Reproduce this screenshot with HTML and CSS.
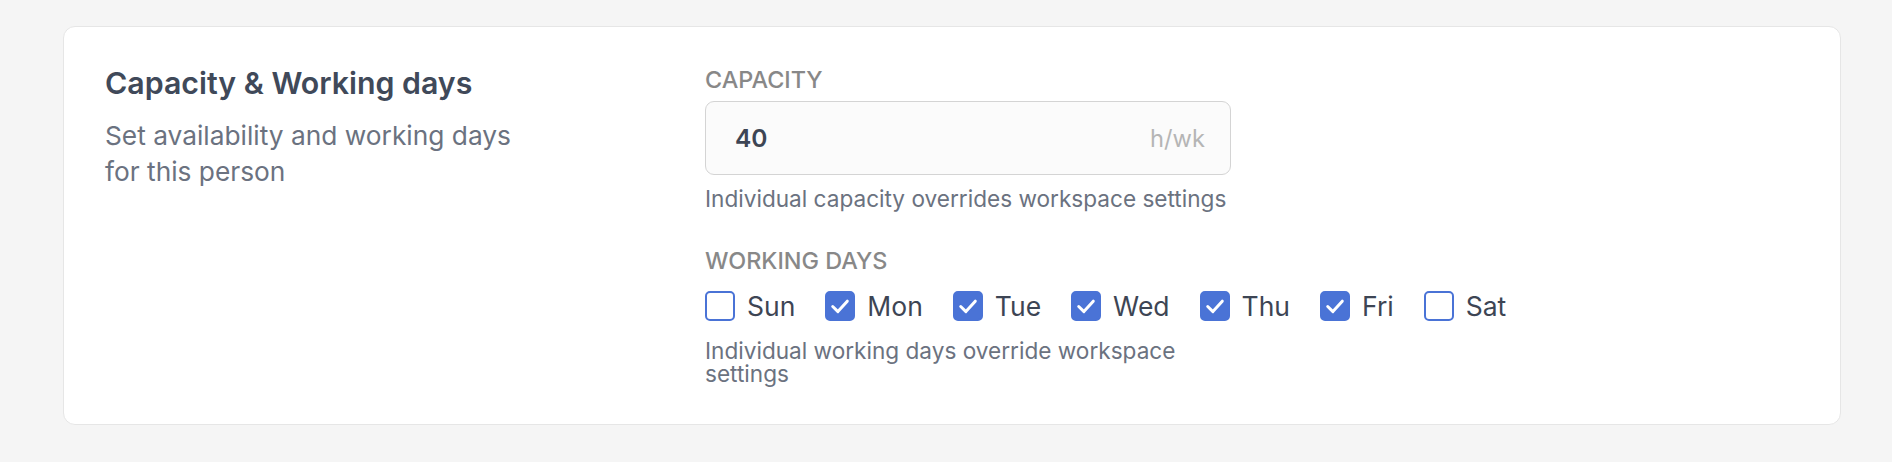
FILE: index.html
```html
<!DOCTYPE html>
<html lang="en">
<head>
<meta charset="utf-8">
<title>Capacity &amp; Working days</title>
<link rel="stylesheet" href="styles.css">
</head>
<body>
<main class="page">
  <section class="card">
    <div class="intro">
      <h2 class="title">Capacity &amp; Working days</h2>
      <p class="desc">Set availability and working days<br>for this person</p>
    </div>
    <div class="fields">
      <label class="label" for="cap">CAPACITY</label>
      <div class="input">
        <span class="value" id="cap">40</span>
        <span class="unit">h/wk</span>
      </div>
      <p class="help">Individual capacity overrides workspace settings</p>

      <div class="label label-days">WORKING DAYS</div>
      <div class="days">
        <span class="day"><span class="box"></span>Sun</span>
        <span class="day"><span class="box on"><svg viewBox="0 0 20 20"><path d="M4.4 10.4l4 3.9 7.2-8"/></svg></span>Mon</span>
        <span class="day"><span class="box on"><svg viewBox="0 0 20 20"><path d="M4.4 10.4l4 3.9 7.2-8"/></svg></span>Tue</span>
        <span class="day"><span class="box on"><svg viewBox="0 0 20 20"><path d="M4.4 10.4l4 3.9 7.2-8"/></svg></span>Wed</span>
        <span class="day"><span class="box on"><svg viewBox="0 0 20 20"><path d="M4.4 10.4l4 3.9 7.2-8"/></svg></span>Thu</span>
        <span class="day"><span class="box on"><svg viewBox="0 0 20 20"><path d="M4.4 10.4l4 3.9 7.2-8"/></svg></span>Fri</span>
        <span class="day"><span class="box"></span>Sat</span>
      </div>
      <p class="help help-days">Individual working days override workspace settings</p>
    </div>
  </section>
</main>
</body>
</html>
```
FILE: styles.css
```css
html, body {
  margin: 0;
  padding: 0;
  background: #f5f5f5;
}
body {
  font-family: "Inter", "Open Sans", sans-serif;
  color: #3d4554;
}
.page {
  padding: 26px 51px 0 63px;
}
.card {
  background: #ffffff;
  border: 1px solid #e6e6e6;
  border-radius: 12px;
  padding: 38px 40px 39px 41px;
  display: grid;
  grid-template-columns: 600px 526px;
}
.title {
  margin: 0;
  font-size: 30.3px;
  line-height: 36px;
  font-weight: 600;
  color: #404959;
}
.desc {
  margin: 17px 0 0;
  font-size: 26.3px;
  line-height: 36px;
  color: #6b7280;
}
.fields {
  display: flex;
  flex-direction: column;
  align-items: flex-start;
}
.label {
  font-size: 23.4px;
  line-height: 30px;
  font-weight: 500;
  color: #888888;
}
.input {
  box-sizing: border-box;
  margin-top: 6px;
  width: 526px;
  height: 74px;
  border: 1px solid #d4d4d4;
  border-radius: 9px;
  background: #fbfbfb;
  display: flex;
  align-items: center;
  justify-content: space-between;
  padding: 0 25px 0 29px;
}
.value {
  font-size: 24.5px;
  font-weight: 600;
  color: #3d4554;
}
.unit {
  font-size: 23.7px;
  color: #b5b5b5;
}
.help {
  margin: 12px 0 0;
  font-size: 22.6px;
  line-height: 24px;
  color: #6b7280;
}
.label-days {
  margin-top: 38px;
  line-height: 24px;
}
.days {
  margin-top: 18px;
  display: flex;
  gap: 30px;
}
.day {
  display: flex;
  align-items: center;
  gap: 12px;
  font-size: 26.5px;
  line-height: 30px;
  color: #3d4554;
}
.box {
  box-sizing: border-box;
  width: 30px;
  height: 30px;
  border: 2px solid #4a73d6;
  border-radius: 5px;
  background: #ffffff;
  display: flex;
}
.box.on {
  background: #4a73d6;
}
.box svg {
  width: 100%;
  height: 100%;
  fill: none;
  stroke: #ffffff;
  stroke-width: 2.3;
  stroke-linecap: round;
  stroke-linejoin: round;
}
.help-days {
  margin-top: 18px;
  line-height: 23px;
  width: 526px;
}
```
